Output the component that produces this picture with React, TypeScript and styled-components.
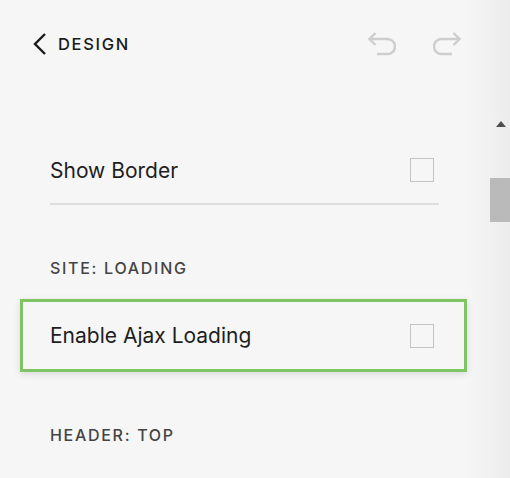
import React from 'react';
import styled, { createGlobalStyle } from 'styled-components';

const GlobalStyle = createGlobalStyle`
    html, body {
        margin: 0;
        padding: 0;
        background: #f6f6f6;
    }
    body {
        font-family: Inter, "Liberation Sans", sans-serif;
    }
`;

const Page = styled.div`
    width: 510px;
    height: 478px;
    overflow: hidden;
    display: flex;
    flex-direction: column;
    background: linear-gradient(to right, #f6f6f6 0, #f6f6f6 468px, #ebebeb 510px);
`;

const Header = styled.div`
    height: 111px;
    box-sizing: border-box;
    padding: 32px 49px 0 33px;
    display: flex;
    align-items: flex-start;
    flex-shrink: 0;
`;

const BackLink = styled.a`
    display: flex;
    align-items: center;
    gap: 11px;
    height: 24px;
    color: #1a1a1a;
    text-decoration: none;
    cursor: pointer;
`;

const BackTitle = styled.span`
    font-size: 16.5px;
    font-weight: 500;
    letter-spacing: 1.7px;
    line-height: 24px;
`;

const Actions = styled.div`
    margin-left: auto;
    display: flex;
    gap: 37px;
    height: 24px;
    align-items: center;
`;

const HistoryIcon = styled.svg<{ $flip?: boolean }>`
    display: block;
    transform: ${(p) => (p.$flip ? 'scaleX(-1)' : 'none')};
`;

const Body = styled.div`
    flex: 1;
    display: flex;
    min-height: 0;
`;

const Content = styled.div`
    flex: 1;
    padding: 26px 21px 0 20px;
`;

const Row = styled.div<{ $highlighted?: boolean }>`
    box-sizing: border-box;
    display: flex;
    align-items: center;
    justify-content: space-between;
    height: ${(p) => (p.$highlighted ? '73px' : '66px')};
    padding: ${(p) => (p.$highlighted ? '0 30px 0 27px' : '0 33px 0 30px')};
    border: ${(p) => (p.$highlighted ? '3px solid #7fc465' : 'none')};
    box-shadow: ${(p) => (p.$highlighted ? '0 2px 7px rgba(0, 0, 0, 0.12)' : 'none')};
`;

const Label = styled.span`
    font-size: 21px;
    color: #1e1e1e;
`;

const Checkbox = styled.span`
    width: 24px;
    height: 24px;
    box-sizing: border-box;
    border: 1px solid #c4c4c4;
`;

const Divider = styled.div`
    height: 2px;
    background: #dddddd;
    margin: 0 28px 0 30px;
`;

const SectionTitle = styled.div`
    margin: 53px 0 21px 30px;
    font-size: 16px;
    font-weight: 500;
    line-height: 20px;
    letter-spacing: 1.7px;
    color: #444444;
`;

const Scrollbar = styled.div`
    width: 22px;
    flex-shrink: 0;
    background: linear-gradient(to right, #f1f1f1, #ececec);
    display: flex;
    flex-direction: column;
    align-items: flex-end;
`;

const ScrollArrow = styled.div`
    margin: 10px 4px 0 0;
    width: 0;
    height: 0;
    border-left: 5.5px solid transparent;
    border-right: 5.5px solid transparent;
    border-bottom: 6px solid #4f4f4f;
`;

const ScrollThumb = styled.div`
    margin-top: 51px;
    width: 20px;
    height: 44px;
    background: #bababa;
`;

const Undo: React.FC<{ flip?: boolean }> = ({ flip }) => (
    <HistoryIcon $flip={flip} width="28" height="24" viewBox="0 0 28 24" fill="none" stroke="#cecece" strokeWidth="2.4">
        <polyline points="7.5,1 1.5,7 7.5,13" />
        <path d="M1.5 7 H19.5 A7.5 7.5 0 0 1 19.5 22 H9" />
    </HistoryIcon>
);

const App: React.FC = () => {
    return (
        <>
            <GlobalStyle />
            <Page>
                <Header>
                    <BackLink>
                        <svg width="14" height="22" viewBox="0 0 14 22" fill="none" stroke="#1a1a1a" strokeWidth="2.4">
                            <polyline points="12,1 2,11 12,21" />
                        </svg>
                        <BackTitle>DESIGN</BackTitle>
                    </BackLink>
                    <Actions>
                        <Undo />
                        <Undo flip />
                    </Actions>
                </Header>
                <Body>
                    <Content>
                        <Row>
                            <Label>Show Border</Label>
                            <Checkbox />
                        </Row>
                        <Divider />
                        <SectionTitle>SITE: LOADING</SectionTitle>
                        <Row $highlighted>
                            <Label>Enable Ajax Loading</Label>
                            <Checkbox />
                        </Row>
                        <SectionTitle>HEADER: TOP</SectionTitle>
                    </Content>
                    <Scrollbar>
                        <ScrollArrow />
                        <ScrollThumb />
                    </Scrollbar>
                </Body>
            </Page>
        </>
    );
};

export default App;
